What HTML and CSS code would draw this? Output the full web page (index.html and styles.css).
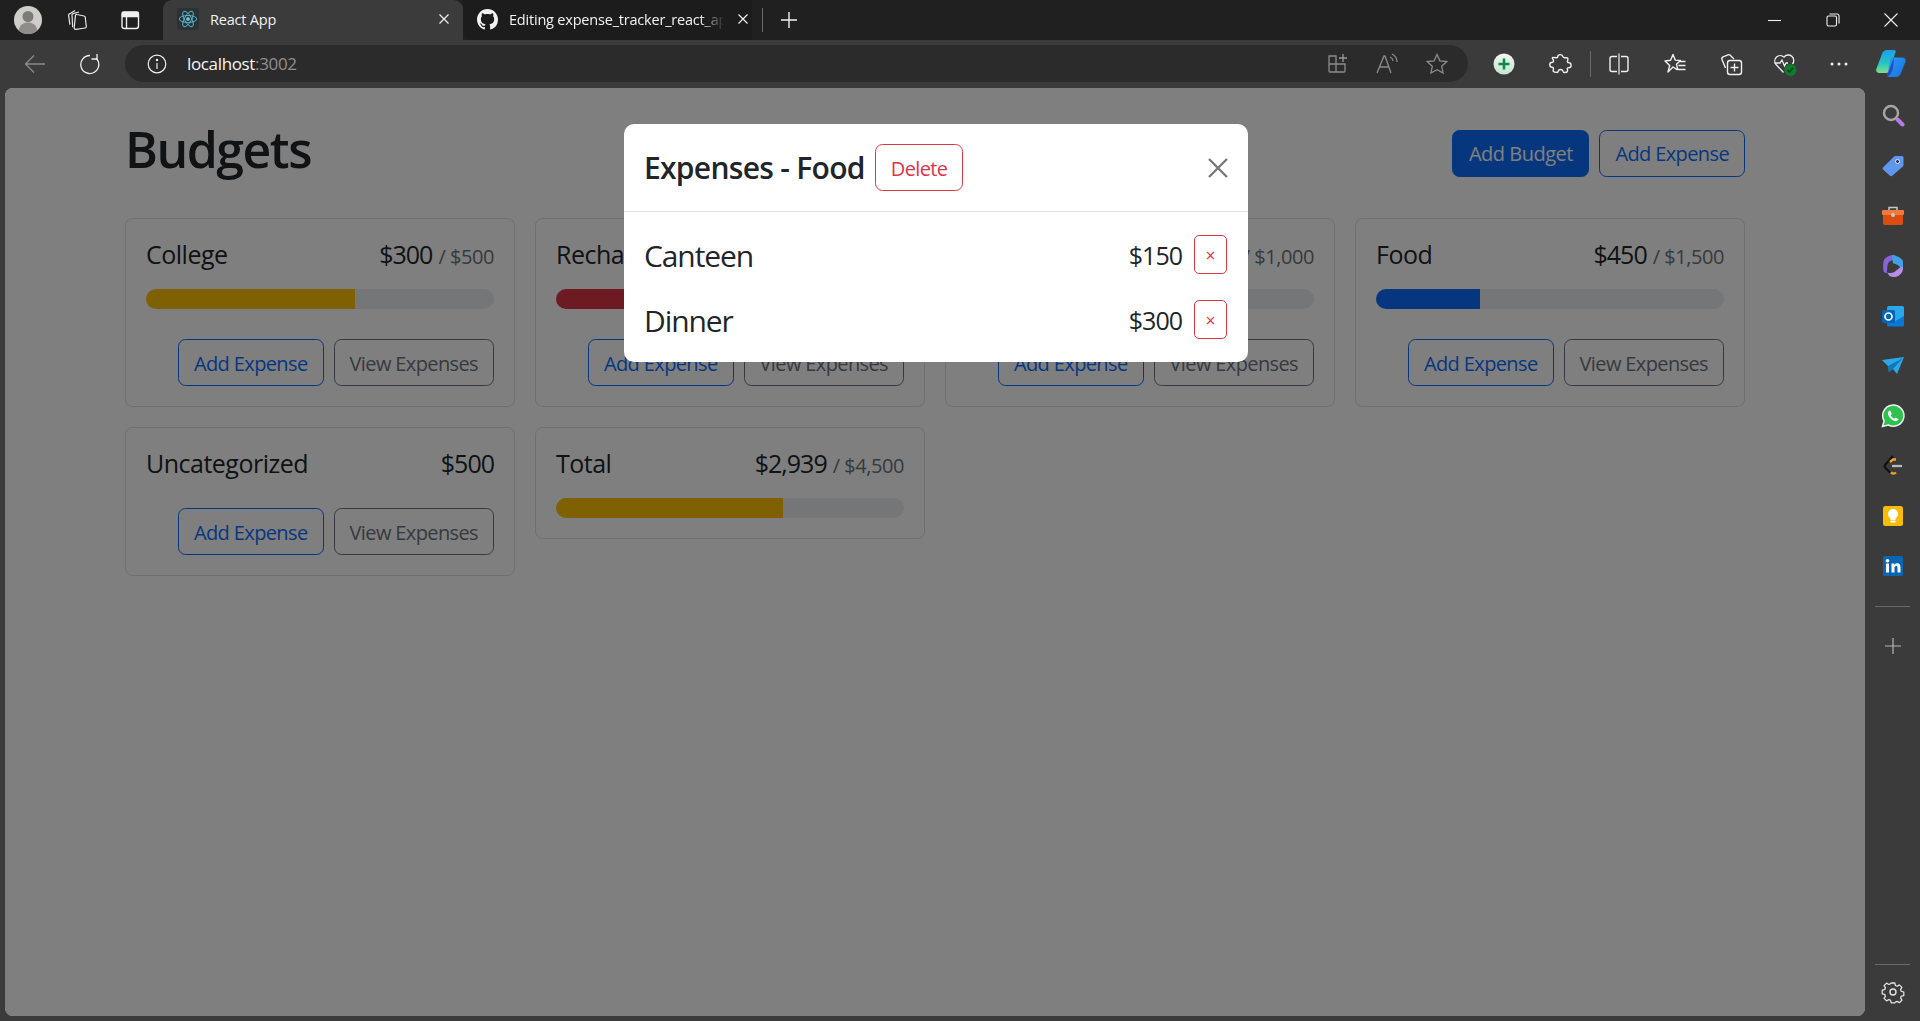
FILE: index.html
```html
<!DOCTYPE html>
<html lang="en">
<head>
<meta charset="utf-8">
<title>React App</title>
<link rel="stylesheet" href="styles.css">
</head>
<body>
<div class="browser">
  <header class="tabstrip">
    <div class="avatar"><svg viewBox="0 0 28 28" width="28" height="28"><circle cx="14" cy="14" r="14" fill="#cfcdc9"/><circle cx="14" cy="10.500" r="5.500" fill="#7d7b78"/><path d="M4.500 24.300c1.500-5.800 5-7.800 9.500-7.800s8 2 9.500 7.800a14 14 0 0 1-19 0z" fill="#8f8d8a"/></svg></div>
    <svg class="strip-icon strip-collections" viewBox="0 0 22 22" fill="none" stroke="#e6e6e6" stroke-width="1.200"><path d="M9.800 20.300l9.400-1.300a1.300 1.300 0 0 0 1.100-1.400L19.200 8a1.300 1.300 0 0 0-1.100-1L11 5.500a1.300 1.300 0 0 0-1.600 1.100L8.200 18.900a1.300 1.300 0 0 0 1.600 1.400z"/><path d="M6.700 18.300L6 6a1.400 1.400 0 0 1 1.100-1.400L13 3"/><path d="M3.900 15.600L2.600 6.400a1.400 1.400 0 0 1 .9-1.500L9 1.600"/></svg>
    <svg class="strip-icon strip-tabs" viewBox="0 0 22 22" fill="none" stroke="#efefef" stroke-width="1.400"><rect x="3" y="3" width="16.500" height="16.500" rx="2.500"/><path d="M3.500 3.500h15.500V7.500H3.500z" fill="#efefef"/><path d="M7.500 7v12"/></svg>
    <div class="tab tab-active">
      <span class="tab-favicon"><svg viewBox="-12 -12 24 24" width="20" height="20" fill="none" stroke="#5fc3dc" stroke-width="1"><ellipse rx="10.500" ry="4.200"/><ellipse rx="10.500" ry="4.200" transform="rotate(60)"/><ellipse rx="10.500" ry="4.200" transform="rotate(120)"/><circle r="1.900" fill="#5fc3dc"/></svg></span>
      <span class="tab-title">React App</span>
      <svg class="tab-close" viewBox="0 0 12 12" stroke="#f0f0f0" stroke-width="1.200"><path d="M1.500 1.500l9 9M10.500 1.500l-9 9"/></svg>
    </div>
    <div class="tab tab-other">
      <svg class="tab-gh" viewBox="0 0 16 16" fill="#f2f2f2"><path d="M8 0C3.580 0 0 3.580 0 8c0 3.540 2.290 6.530 5.470 7.590.4.070.55-.17.55-.38 0-.19-.01-.82-.01-1.490-2.010.37-2.530-.49-2.690-.94-.09-.23-.48-.94-.82-1.130-.28-.15-.68-.52-.01-.53.630-.01 1.080.58 1.230.82.720 1.210 1.870.87 2.330.66.070-.52.280-.87.510-1.070-1.780-.2-3.640-.89-3.640-3.950 0-.87.310-1.590.820-2.150-.08-.2-.36-1.020.08-2.120 0 0 .670-.21 2.200.82.640-.18 1.320-.27 2-.27s1.360.09 2 .27c1.530-1.040 2.200-.82 2.200-.82.440 1.100.160 1.920.080 2.120.51.560.820 1.270.820 2.150 0 3.070-1.870 3.750-3.650 3.950.290.250.540.730.540 1.480 0 1.070-.01 1.930-.01 2.200 0 .210.150.460.550.380A8.010 8.010 0 0 0 16 8c0-4.420-3.580-8-8-8z"/></svg>
      <span class="tab-title tab-title-fade">Editing expense_tracker_react_app</span>
      <svg class="tab-close" viewBox="0 0 12 12" stroke="#f0f0f0" stroke-width="1.200"><path d="M1.500 1.500l9 9M10.500 1.500l-9 9"/></svg>
    </div>
    <span class="strip-divider"></span>
    <svg class="strip-plus" viewBox="0 0 18 18" stroke="#f0f0f0" stroke-width="1.400"><path d="M9 1v16M1 9h16"/></svg>
    <div class="window-controls">
      <svg class="win-icon" viewBox="0 0 14 14" stroke="#f0f0f0" stroke-width="1.100"><path d="M0 7.500h13"/></svg>
      <svg class="win-icon" viewBox="0 0 14 14" fill="none" stroke="#f0f0f0" stroke-width="1.100"><rect x="1" y="3" width="9.500" height="10" rx="1.500"/><path d="M3.500 1h7.500a2 2 0 0 1 2 2v7.500"/></svg>
      <svg class="win-icon" viewBox="0 0 14 14" stroke="#f0f0f0" stroke-width="1.100"><path d="M.5.500l13 13M13.500.500l-13 13"/></svg>
    </div>
  </header>

  <nav class="toolbar">
    <span class="tool"><svg viewBox="0 0 22 22" width="22" height="22" fill="none" stroke="#8a8a8a" stroke-width="1.300"><path d="M21 11H1.500M10 2.500L1.500 11l8.500 8.500"/></svg></span>
    <span class="tool tool-reload"><svg viewBox="0 0 22 22" width="22" height="22" fill="none" stroke="#f0f0f0" stroke-width="1.300"><path d="M17.500 5.500A9 9 0 1 1 11 2.500"/><path d="M18 1v5h-5.500"/></svg></span>
    <div class="address">
      <svg class="addr-info" viewBox="0 0 20 20" fill="none" stroke="#efefef" stroke-width="1.200"><circle cx="10" cy="10" r="8.800"/><path d="M10 9v6"/><circle cx="10" cy="6" r=".6" fill="#efefef"/></svg>
      <span class="addr-text">localhost<span class="addr-port">:3002</span></span>
      <div class="addr-actions">
        <svg viewBox="0 0 24 24" fill="none" stroke="#8c8c8c" stroke-width="1.300"><path d="M4 4h7v16H5a1 1 0 0 1-1-1zM4 12h16v7a1 1 0 0 1-1 1h-8"/><path d="M18 2v8M14 6h8" stroke="#9a9a9a"/></svg>
        <svg viewBox="0 0 24 24" fill="none" stroke="#8c8c8c" stroke-width="1.300"><path d="M2 21L9 4h1l6 17M4.500 15h10"/><path d="M15 5a5 5 0 0 1 3 4M17 2a9 9 0 0 1 5 8"/></svg>
        <svg viewBox="0 0 24 24" fill="none" stroke="#8c8c8c" stroke-width="1.300"><path d="M12 2.500l2.900 6.300 6.900.8-5.100 4.700 1.400 6.800-6.100-3.400-6.100 3.400 1.400-6.800-5.100-4.700 6.900-.8z"/></svg>
      </div>
    </div>
    <div class="tool-group">
      <span class="tool"><svg viewBox="0 0 24 24" width="24" height="24"><defs><linearGradient id="addg" x1="0" y1="0" x2="0" y2="1"><stop offset="0" stop-color="#f1f7f1"/><stop offset="1" stop-color="#c5e6cf"/></linearGradient></defs><circle cx="12" cy="12" r="10.500" fill="url(#addg)"/><path d="M12 6.500v11M6.500 12h11" stroke="#0b8a4a" stroke-width="2.600"/></svg></span>
      <span class="tool"><svg viewBox="0 0 24 24" width="24" height="24" fill="none" stroke="#f0f0f0" stroke-width="1.400" stroke-linejoin="round"><path d="M9.500 5.500a2.800 2.800 0 0 1 5.500-.8c.2.900 1 1.200 2 1.100l1.500-.2c1 0 1.500.6 1.400 1.500l-.4 2.400c-.2 1 .6 1.100 1 1.100a2.600 2.600 0 0 1 0 5.200c-.6 0-1.400.3-1.200 1.300l.3 1.600c.1.900-.4 1.500-1.300 1.600l-2 .2c-.9.100-1.100-.6-1.300-1.200a2.500 2.500 0 0 0-4.800 0c-.2.700-.6 1.300-1.500 1.100l-2.300-.4c-1-.2-1.400-.8-1.200-1.700l.3-1.700c.1-.9-.5-1.300-1.200-1.400a2.500 2.500 0 0 1 0-5c.9-.1 1.400-.6 1.200-1.500l-.3-1.300C3.800 6 4.300 5.400 5.200 5.400l2.800.3c1 .1 1.500-.1 1.500-.2z"/></svg></span>
      <span class="tool-divider"></span>
      <span class="tool"><svg viewBox="0 0 24 24" width="24" height="24" fill="none" stroke="#f0f0f0" stroke-width="1.400"><path d="M10 4.500H5a2 2 0 0 0-2 2v11a2 2 0 0 0 2 2h5M14 4.500h5a2 2 0 0 1 2 2v11a2 2 0 0 1-2 2h-5"/><path d="M12 1.500v21" stroke-width="1.200"/></svg></span>
      <span class="tool"><svg viewBox="0 0 24 24" width="24" height="24" fill="none" stroke="#f0f0f0" stroke-width="1.400" stroke-linejoin="round"><path d="M10 2.500l2.200 5.600 5.300.4-4 3.700 1.200 5.300-1-.2-3.700-2.300L5 20l1.700-6.500L2 9l5.600-.7z"/><path d="M16.500 9.500h6M15.500 13.500h7M15 17.500h7.500"/></svg></span>
      <span class="tool"><svg viewBox="0 0 24 24" width="24" height="24" fill="none" stroke="#f0f0f0" stroke-width="1.400"><path d="M6.500 16L3 7.500a2 2 0 0 1 1-2.600L9 2.800a2 2 0 0 1 2.200.4L15 7"/><rect x="8.500" y="8.500" width="14" height="14" rx="2.500"/><path d="M15.500 11.500v8M11.500 15.500h8"/></svg></span>
      <span class="tool tool-tight"><svg viewBox="0 0 26 26" width="26" height="26" fill="none" stroke="#f0f0f0" stroke-width="1.300"><path d="M11.500 21.500L4 13.500a5.500 5.500 0 0 1 8-7.500 5.500 5.500 0 0 1 8.500 7"/><path d="M2.500 12H8l2-3 2.500 6 1.500-3h2"/><circle cx="18.500" cy="19" r="6" fill="#0e7c2c" stroke="none"/><path d="M15.500 19l2 2 3.500-4" stroke="#0c3d18" stroke-width="1.500"/></svg></span>
      <span class="tool tool-tight"><svg viewBox="0 0 18 4" width="18" height="4" fill="#f0f0f0"><circle cx="2" cy="2" r="1.500"/><circle cx="9" cy="2" r="1.500"/><circle cx="16" cy="2" r="1.500"/></svg></span>
      <span class="tool tool-copilot"><svg viewBox="0 0 30 27" width="30" height="27"><defs><linearGradient id="cpa" x1="0" y1="0" x2="0" y2="1"><stop offset="0" stop-color="#1d9fe8"/><stop offset=".55" stop-color="#22c3c6"/><stop offset="1" stop-color="#7fe08a"/></linearGradient><linearGradient id="cpb" x1="0" y1="0" x2="1" y2="1"><stop offset="0" stop-color="#2a9df0"/><stop offset="1" stop-color="#1670e0"/></linearGradient></defs><path d="M11 0h7c1.500 0 2 1 1.500 2.500L13 21c-.5 1.200-1.500 2-3 2H3.500C1 23 -.3 21 .3 19L6 4c1-2.500 2.500-4 5-4z" fill="url(#cpa)"/><path d="M16 7.500h10c2.500 0 4 1.500 3.500 4L25 23c-1 2.700-2.500 4-5 4h-7c-1.500 0-2-1-1.500-2.500L14 11c.5-2 1-3.500 2-3.500z" fill="url(#cpb)"/><path d="M13 21l5-14c-.3 6-1 14-3.500 17-1 1.200-2.500 3-4 3l1-3z" fill="#2b46c4"/></svg></span>
    </div>
  </nav>

  <div class="workspace">
    <main class="page">
      <div class="container">
        <div class="page-head">
          <h1 class="page-title">Budgets</h1>
          <div class="head-actions">
            <button class="btn btn-primary">Add Budget</button>
            <button class="btn btn-outline-primary">Add Expense</button>
          </div>
        </div>
        <div class="budget-grid">
          <section class="card">
            <div class="card-title"><span>College</span><span class="amount">$300<small class="amount-max">/ $500</small></span></div>
            <div class="progress"><div class="progress-fill fill-warning" style="width:60%"></div></div>
            <div class="card-actions"><button class="btn btn-outline-primary">Add Expense</button><button class="btn btn-outline-secondary">View Expenses</button></div>
          </section>
          <section class="card">
            <div class="card-title"><span>Recharge</span><span class="amount">$1,400<small class="amount-max">/ $1,500</small></span></div>
            <div class="progress"><div class="progress-fill fill-danger" style="width:93%"></div></div>
            <div class="card-actions"><button class="btn btn-outline-primary">Add Expense</button><button class="btn btn-outline-secondary">View Expenses</button></div>
          </section>
          <section class="card">
            <div class="card-title"><span>Travel</span><span class="amount">$289<small class="amount-max">/ $1,000</small></span></div>
            <div class="progress"><div class="progress-fill fill-primary" style="width:29%"></div></div>
            <div class="card-actions"><button class="btn btn-outline-primary">Add Expense</button><button class="btn btn-outline-secondary">View Expenses</button></div>
          </section>
          <section class="card">
            <div class="card-title"><span>Food</span><span class="amount">$450<small class="amount-max">/ $1,500</small></span></div>
            <div class="progress"><div class="progress-fill fill-primary" style="width:30%"></div></div>
            <div class="card-actions"><button class="btn btn-outline-primary">Add Expense</button><button class="btn btn-outline-secondary">View Expenses</button></div>
          </section>
          <section class="card">
            <div class="card-title"><span>Uncategorized</span><span class="amount">$500</span></div>
            <div class="card-actions"><button class="btn btn-outline-primary">Add Expense</button><button class="btn btn-outline-secondary">View Expenses</button></div>
          </section>
          <section class="card">
            <div class="card-title"><span>Total</span><span class="amount">$2,939<small class="amount-max">/ $4,500</small></span></div>
            <div class="progress"><div class="progress-fill fill-warning" style="width:65.300%"></div></div>
          </section>
        </div>
      </div>

      <div class="backdrop">
        <div class="modal">
          <div class="modal-header">
            <h2 class="modal-title">Expenses - Food</h2>
            <button class="btn btn-outline-danger">Delete</button>
            <svg class="modal-close" viewBox="0 0 20 20" stroke="#777" stroke-width="2.300"><path d="M1 1l18 18M19 1L1 19"/></svg>
          </div>
          <div class="modal-body">
            <div class="expense-row"><span class="expense-name">Canteen</span><span class="expense-amount">$150</span><button class="btn-sm">&times;</button></div>
            <div class="expense-row"><span class="expense-name">Dinner</span><span class="expense-amount">$300</span><button class="btn-sm">&times;</button></div>
          </div>
        </div>
      </div>
    </main>

    <aside class="sidebar">
      <div class="side-apps">
        <span class="side-app"><svg class="side-search" viewBox="0 0 24 24" width="24" height="24" fill="none"><circle cx="10" cy="10" r="7" stroke="#a6a6a6" stroke-width="2.400"/><path d="M16.500 16.500l5 5" stroke="#b67ce0" stroke-width="4" stroke-linecap="round"/></svg></span>
        <span class="side-app"><svg viewBox="0 0 24 24" width="24" height="24"><path d="M2 13.500L13 2.500a2 2 0 0 1 1.500-.5H21a1.500 1.500 0 0 1 1.500 1.500V11a2 2 0 0 1-.6 1.400L11.500 21.500a2 2 0 0 1-2.800 0L2 15.500a1.500 1.500 0 0 1 0-2z" fill="#5f96ee"/><circle cx="16.500" cy="7.500" r="2" fill="#25364f" stroke="#dfe8f7"/></svg></span>
        <span class="side-app"><svg viewBox="0 0 24 24" width="24" height="24"><path d="M8 7V3.500h8V7" fill="none" stroke="#c7c7c7" stroke-width="1.500"/><rect x="1" y="6" width="22" height="5" rx="1" fill="#ef7a3b"/><path d="M2 11h20v8a2 2 0 0 1-2 2H4a2 2 0 0 1-2-2z" fill="#dc4d12"/><circle cx="12" cy="11" r="2" fill="#c9c9c9"/></svg></span>
        <span class="side-app"><svg viewBox="0 0 24 24" width="24" height="24"><path d="M12 1c-4 0-9 3-9.500 6.500C2 10 2 14 2.500 17c.3 1.500 2 2.500 3.500 1.500.3-3 0-7 1-9C8 7 11 6 14 5.500z" fill="#8a63d8"/><path d="M11 1c3 0 8 2 10.500 5 .7 1 .5 5 .5 7-.2 1.500-2 2-3 .5-1-2-3-3.500-7-4-.5-3-1-6-1-8.500z" fill="#3fa0e6"/><path d="M6 18.500c3 1 6 .5 8-1 2-1.500 4-3.500 5-4l3-.5c.5 3-1 6.500-4 8.500-3 2-7 2-9.500.5z" fill="#b68ee8"/><path d="M7.500 9.500L12 9.500l3.500 2.500-3 3H8z" fill="#3b3b3b"/></svg></span>
        <span class="side-app"><svg viewBox="0 0 24 24" width="24" height="24"><rect x="6" y="2" width="17" height="20" rx="1.500" fill="#28a8ea"/><path d="M6 12l8.500 5 8.500-5v9a1.500 1.500 0 0 1-1.500 1.500H7.500A1.500 1.500 0 0 1 6 21z" fill="#0a78d4"/><rect x="1" y="6" width="13" height="13" rx="1.500" fill="#0364b8"/><circle cx="7.500" cy="12.500" r="3.500" fill="none" stroke="#fff" stroke-width="1.700"/></svg></span>
        <span class="side-app"><svg viewBox="0 0 24 24" width="24" height="24"><path d="M1 6l22-3-7 17-4-5-4 3-1-6z" fill="#2aa9ea"/><path d="M7 12l15-8-10 11-4 3z" fill="#1276b8"/></svg></span>
        <span class="side-app"><svg viewBox="0 0 24 24" width="24" height="24"><path d="M1.500 22.500l1.600-5.600A10.600 10.600 0 1 1 7.300 21z" fill="#2fc14f" stroke="#f1f1f1" stroke-width="1.500"/><path d="M8.500 6.500c-1.500 1-2 2.800-1 5 1 2.300 3.200 4.600 6 5.500 2 .6 3.500-.3 4-1.700l-2.800-1.800-1.300 1.200c-1.500-.6-3-2-3.600-3.500l1-1.300-1.300-3z" fill="#fff"/></svg></span>
        <span class="side-app"><svg viewBox="0 0 24 24" width="24" height="24" fill="none" stroke-width="2.300"><path d="M12 2L4.500 10.500a2.500 2.500 0 0 0 0 3.500L9 18.500" stroke="#111"/><path d="M9 8l3-2.500h3M10 18.500c2 1.500 3.500 1.500 5 0" stroke="#f2a11f"/><path d="M11 12h10" stroke="#b8b8b8"/></svg></span>
        <span class="side-app"><svg viewBox="0 0 24 24" width="24" height="24"><rect x="2" y="2" width="20" height="20" rx="2.500" fill="#f9bc05"/><circle cx="12" cy="10" r="5" fill="#fff"/><rect x="9.500" y="14" width="5" height="2.400" fill="#fff"/><rect x="9.500" y="17" width="5" height="1.500" fill="#fff"/></svg></span>
        <span class="side-app"><svg viewBox="0 0 24 24" width="24" height="24"><rect x="2" y="2" width="20" height="20" rx="1.500" fill="#0a66b0"/><rect x="5" y="9.500" width="3" height="9" fill="#fff"/><circle cx="6.500" cy="6.700" r="1.800" fill="#fff"/><path d="M10.500 9.500h2.800v1.300c.8-1 1.700-1.500 2.900-1.500 2.200 0 3.300 1.300 3.300 4v5.200h-3v-4.800c0-1.200-.4-1.800-1.400-1.800s-1.600.7-1.600 2v4.600h-3z" fill="#fff"/></svg></span>
        <span class="side-rule"></span>
        <span class="side-add"><svg viewBox="0 0 16 16" width="16" height="16" stroke="#b5b5b5" stroke-width="1.200"><path d="M8 0v16M0 8h16"/></svg></span>
      </div>
      <div class="side-foot">
        <span class="side-rule side-rule-foot"></span>
        <svg viewBox="0 0 24 24" width="24" height="24" fill="none" stroke="#e4e4e4" stroke-width="1.400" stroke-linejoin="round"><path d="M10 2h4l.7 2.800 1.900.8 2.500-1.500 2.800 2.800-1.500 2.500.8 1.900 2.800.7v4l-2.800.7-.8 1.900 1.500 2.500-2.800 2.800-2.500-1.500-1.900.8L14 24h-4l-.7-2.800-1.900-.8-2.500 1.500-2.800-2.800 1.500-2.500-.8-1.900L0 14v-4l2.800-.7.8-1.900-1.500-2.500 2.800-2.800 2.500 1.500 1.900-.8z" transform="translate(1.200 .2) scale(.9)"/><circle cx="12" cy="11" r="3"/></svg>
      </div>
    </aside>
  </div>
</div>
</body>
</html>
```

FILE: styles.css
```css
* { box-sizing: border-box; }
html, body { margin: 0; height: 100%; overflow: hidden; }
body { font-family: "Open Sans", "Noto Sans", "Liberation Sans", sans-serif; color: #212529; }

.browser { display: flex; flex-direction: column; width: 1920px; height: 1021px; background: #3b3b3b; }

/* tab strip */
.tabstrip { display: flex; align-items: center; height: 40px; padding-left: 14px; background: #202020; flex: none; }
.avatar { width: 28px; height: 28px; flex: none; }
.avatar svg { display: block; }
.strip-icon { width: 22px; height: 22px; flex: none; }
.strip-collections { margin-left: 24px; }
.strip-tabs { margin-left: 31px; }
.tab { display: flex; align-items: center; height: 40px; padding-bottom: 2px; color: #f2f2f2; font-size: 14.500px; letter-spacing: -.2px; }
.tab-active { width: 300px; margin-left: 22px; padding-left: 14px; padding-right: 13px; background: #3b3b3b; border-radius: 9px 9px 0 0; }
.tab-favicon { display: flex; align-items: center; justify-content: center; width: 22px; height: 22px; background: #2b3236; border-radius: 2px; flex: none; margin-right: 11px; }
.tab-title { white-space: nowrap; overflow: hidden; flex: 1; }
.tab-close { width: 12px; height: 12px; flex: none; }
.tab-other { width: 289px; padding-left: 14px; padding-right: 3px; background: #1c1c1c; border-radius: 0 0 0 9px; }
.tab-gh { width: 21px; height: 21px; flex: none; margin-right: 11px; }
.tab-title-fade { margin-right: 12px; -webkit-mask-image: linear-gradient(90deg, #000 88%, transparent 100%); mask-image: linear-gradient(90deg, #000 88%, transparent 100%); }
.strip-divider { width: 1px; height: 24px; background: #6a6a6a; margin-left: 10px; flex: none; }
.strip-plus { width: 18px; height: 18px; margin-left: 17px; flex: none; }
.window-controls { display: flex; align-items: center; gap: 44px; margin-left: auto; padding-right: 22px; }
.win-icon { width: 14px; height: 14px; }

/* toolbar */
.toolbar { display: flex; align-items: center; height: 48px; padding-left: 17px; padding-bottom: 1px; flex: none; }
.tool { display: flex; align-items: center; justify-content: center; width: 36px; height: 36px; flex: none; }
.tool-reload { margin-left: 19px; }
.address { display: flex; align-items: center; width: 1343px; height: 37px; margin-left: 17px; padding: 0 19px 0 22px; background: #2b2b2b; border-radius: 19px; flex: none; }
.addr-info { width: 20px; height: 20px; flex: none; }
.addr-text { margin-left: 20px; padding-bottom: 1px; font-size: 17px; letter-spacing: -.35px; color: #f5f5f5; }
.addr-port { color: #8f8f8f; }
.addr-actions { display: flex; gap: 26px; margin-left: auto; }
.addr-actions svg { width: 24px; height: 24px; }
.tool-group { display: flex; align-items: center; gap: 20px; margin-left: 18px; }
.tool-divider { width: 1px; height: 26px; background: #6a6a6a; margin: 0 -10px 0 -8px; }
.tool-tight { margin-left: -2px; }
.tool-copilot { margin-left: -4px; }

/* workspace */
.workspace { display: flex; flex: 1; min-height: 0; padding: 0 0 5px 5px; }
.page { position: relative; flex: 1; min-width: 0; background: #fff; border-radius: 8px; overflow: hidden; }
.container { width: 1650px; margin: 30px auto 0; padding: 0 15px; }
.page-head { display: flex; align-items: center; margin-bottom: 30px; }
.page-title { margin: 1px auto 9px 0; font-size: 50px; font-weight: 600; line-height: 60px; letter-spacing: -1.500px; }
.head-actions { display: flex; gap: 10px; }

.btn { height: 47px; padding: 2px 15px 0; font: inherit; font-size: 20px; line-height: 1; letter-spacing: -.62px; border: 1px solid transparent; border-radius: 7.500px; background: transparent; white-space: nowrap; }
.btn-primary { padding-left: 15.500px; padding-right: 15.500px; letter-spacing: -.5px; background: #0d6efd; border-color: #0d6efd; color: #fff; }
.btn-outline-primary { border-color: #0d6efd; color: #0d6efd; }
.btn-outline-secondary { border-color: #6c757d; color: #6c757d; }
.btn-outline-danger { border-color: #dc3545; color: #dc3545; }

.budget-grid { display: grid; grid-template-columns: repeat(4, 1fr); gap: 20px; align-items: start; }
.card { padding: 20px; border: 1px solid rgba(0, 0, 0, .125); border-radius: 7.500px; }
.card-title { display: flex; justify-content: space-between; align-items: baseline; height: 30px; line-height: 30px; margin-bottom: 20px; font-size: 25px; letter-spacing: -.5px; }
.amount { white-space: nowrap; letter-spacing: -1px; }
.amount-max { margin-left: 6px; font-size: 20px; color: #6c757d; letter-spacing: -.45px; }
.progress { height: 20px; background: #e9ecef; border-radius: 10px; overflow: hidden; }
.progress-fill { height: 100%; }
.fill-warning { background: #ffc107; }
.fill-danger { background: #dc3545; }
.fill-primary { background: #0d6efd; }
.card-actions { display: flex; justify-content: flex-end; gap: 10px; margin-top: 30px; }

/* modal */
.backdrop { position: absolute; inset: 0; padding-left: 2px; background: rgba(0, 0, 0, .5); }
.modal { width: 624px; margin: 36px auto 0; background: #fff; border-radius: 10px; }
.modal-header { display: flex; align-items: center; height: 88px; padding: 0 21px 0 20px; border-bottom: 1px solid #dee2e6; }
.modal-title { margin: 0 10px 0 0; font-size: 30px; font-weight: 600; letter-spacing: -.7px; white-space: nowrap; }
.modal-close { width: 20px; height: 20px; margin-left: auto; margin-right: -1px; }
.modal-body { display: flex; flex-direction: column; gap: 20px; padding: 20px 21px 20px 20px; }
.expense-row { display: flex; align-items: center; height: 45px; }
.expense-name { margin-right: auto; padding-top: 2px; font-size: 30px; letter-spacing: -1.100px; }
.expense-amount { margin-right: 12px; font-size: 25px; letter-spacing: -1px; }
.btn-sm { width: 33px; height: 39px; padding: 0; font: inherit; font-size: 17.500px; color: #dc3545; background: transparent; border: 1px solid #dc3545; border-radius: 5px; }

/* sidebar */
.sidebar { display: flex; flex-direction: column; justify-content: space-between; width: 55px; flex: none; }
.side-apps { display: flex; flex-direction: column; align-items: center; padding-top: 3px; }
.side-app { display: flex; align-items: center; justify-content: center; width: 100%; height: 50px; flex: none; }
.side-search { margin-bottom: 3px; }
.side-rule { width: 35px; height: 1px; background: #6a6a6a; margin-top: 15px; flex: none; }
.side-add { margin-top: 31px; height: 16px; }
.side-add svg { display: block; }
.side-foot { display: flex; flex-direction: column; align-items: center; gap: 16px; padding-bottom: 11px; }
.side-rule-foot { margin-top: 0; }
```
